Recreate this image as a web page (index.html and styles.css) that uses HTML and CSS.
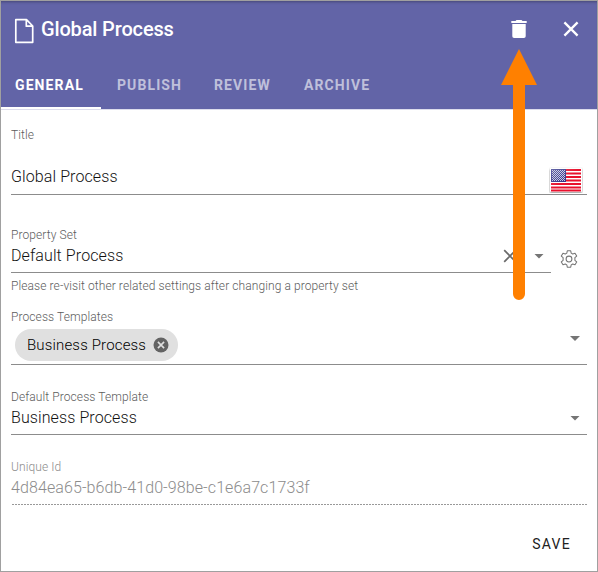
FILE: index.html
```html
<!DOCTYPE html>
<html lang="en">
<head>
<meta charset="utf-8">
<title>Global Process</title>
<link rel="stylesheet" href="styles.css">
</head>
<body>
<div class="dialog">
  <header class="header">
    <div class="toolbar">
      <svg class="doc-icon" width="20" height="26" viewBox="0 0 20 26"><path d="M1.8 1.7H12.5L18.7 8V24.3H1.8ZM12.3 1.7V8.2H18.7" fill="none" stroke="#fff" stroke-width="1.7" stroke-linejoin="round"/></svg>
      <h1 class="title">Global Process</h1>
      <svg class="trash-icon" width="24" height="24" viewBox="0 0 24 24"><path d="M5.3 7H18.7V19.2a1.8 1.8 0 0 1-1.8 1.8H7.1a1.8 1.8 0 0 1-1.8-1.8ZM4.3 4H8.5L9.5 3H14.5L15.5 4H19.7V6H4.3Z" fill="#fff"/></svg>
      <svg class="close-icon" width="24" height="24" viewBox="0 0 24 24"><path d="M5.4 5.4 18.6 18.6M18.6 5.4 5.4 18.6" stroke="#fff" stroke-width="2.3"/></svg>
    </div>
    <nav class="tabs">
      <a class="tab tab-active">GENERAL</a>
      <a class="tab tab-publish">PUBLISH</a>
      <a class="tab tab-review">REVIEW</a>
      <a class="tab tab-archive">ARCHIVE</a>
    </nav>
  </header>
  <main class="form">
    <div class="field field-title">
      <label class="label">Title</label>
      <div class="control">
        <span class="value">Global Process</span>
        <svg class="flag" width="34" height="26" viewBox="0 0 34 26">
          <defs>
            <pattern id="stars" width="2" height="2" patternUnits="userSpaceOnUse"><path d="M0 0h1v1H0ZM1 1h1v1H1Z" fill="#c3c6df"/></pattern>
            <linearGradient id="gloss" x2="1" y2="1"><stop offset="0" stop-color="#fff" stop-opacity=".25"/><stop offset=".5" stop-color="#fff" stop-opacity="0"/></linearGradient>
          </defs>
          <rect class="flag-edge" x="1" y="1" width="32" height="24" rx="1"/>
          <path d="M2 3h30M2 6.5h30M2 10h30M2 13.5h30M2 17h30M2 20.5h30M2 23.5h30" stroke="#e8112d" stroke-width="1.8"/>
          <path d="M2 2h15v13H2Z" fill="#34358a"/><path d="M3 3h13v11H3Z" fill="url(#stars)"/>
          <path d="M2 2h30v22H2Z" fill="url(#gloss)"/>
        </svg>
      </div>
    </div>
    <div class="property-row">
      <div class="field field-property">
        <label class="label">Property Set</label>
        <div class="control">
          <span class="value">Default Process</span>
          <svg class="clear" width="14" height="14" viewBox="0 0 14 14"><path d="M1.2 1.2 12.8 12.8M12.8 1.2 1.2 12.8" stroke="#6a6a6a" stroke-width="1.7"/></svg>
          <span class="caret"></span>
        </div>
      </div>
      <svg class="gear" width="18" height="18" viewBox="0 0 18 18" fill="none" stroke="#757575" stroke-width="1.05" stroke-linejoin="round"><path d="M7.3.8h3.4l.5 2.3 1.5.9 2.3-.8 1.7 2.9-1.8 1.6v2.6l1.8 1.6-1.7 2.9-2.3-.8-1.5.9-.5 2.3H7.3l-.5-2.3-1.5-.9-2.3.8-1.7-2.9 1.8-1.6V7.7L1.3 6.1 3 3.2l2.3.8 1.5-.9Z"/><circle cx="9" cy="9" r="2.9"/></svg>
    </div>
    <p class="hint">Please re-visit other related settings after changing a property set</p>
    <div class="field field-templates">
      <label class="label">Process Templates</label>
      <div class="control">
        <span class="chip">Business Process<svg class="chip-close" width="16" height="16" viewBox="0 0 16 16"><circle cx="8" cy="8" r="7.5" fill="#636363"/><path d="m4.9 4.9 6.2 6.2m0-6.2-6.2 6.2" stroke="#e0e0e0" stroke-width="1.6"/></svg></span>
        <span class="caret"></span>
      </div>
    </div>
    <div class="field field-default">
      <label class="label">Default Process Template</label>
      <div class="control">
        <span class="value">Business Process</span>
        <span class="caret"></span>
      </div>
    </div>
    <div class="field field-id">
      <label class="label">Unique Id</label>
      <div class="control"><span class="value">4d84ea65-b6db-41d0-98be-c1e6a7c1733f</span></div>
    </div>
  </main>
  <footer class="actions"><button class="save">SAVE</button></footer>
  <svg class="pointer" width="36" height="252" viewBox="0 0 36 252"><path d="M18 0 36 36H24V245a6 6 0 0 1-12 0V36H0Z" fill="#ff8000"/></svg>
</div>
</body>
</html>
```
FILE: styles.css
```css
* { box-sizing: border-box; }
body { margin: 0; font-family: Roboto, sans-serif; }
.dialog { position: relative; width: 598px; height: 572px; border: 1px solid #a0a0a0; background: #fff; overflow: hidden; }
.header { height: 109px; background: #6264a7; border-bottom: 1px solid #dcdcec; box-shadow: inset 0 3px 3px -2px rgba(0, 0, 0, .3); }
.toolbar { display: flex; align-items: center; height: 60px; padding: 0 14px 0 13px; }
.title { margin: -4px auto 0 7px; color: #fff; font-size: 20px; line-height: 24px; font-weight: 500; letter-spacing: -.15px; }
.trash-icon { margin: -5px 28px 0 0; }
.close-icon { margin-top: -4px; }
.tabs { display: flex; height: 48px; }
.tab { display: flex; align-items: center; height: 48px; color: rgba(255, 255, 255, .6); font-size: 14px; font-weight: 700; letter-spacing: 1.1px; }
.tab-active { width: 100px; padding: 2px 0 0 14px; color: #fff; border-bottom: 2px solid #fff; }
.tab-publish { width: 98px; padding-left: 16px; }
.tab-review { width: 90px; padding-left: 15px; }
.tab-archive { padding-left: 15px; }
.form { padding: 17px 10px 0; }
.field { display: flex; flex-direction: column; border-bottom: 1px solid #8c8c8c; }
.label, .hint { color: #5c5c5c; font-size: 12px; line-height: 16px; font-weight: 300; letter-spacing: .09px; }
.control { display: flex; align-items: center; height: 29px; padding-bottom: 3px; }
.value { margin-right: auto; color: #111; font-size: 16px; line-height: 24px; font-weight: 300; letter-spacing: .1px; }
.field-title .control { height: 35px; margin-top: 16px; padding: 0; }
.flag { margin: 7px 4px 0 0; }
.flag-edge { fill: #fff; filter: drop-shadow(0 1px 1px rgba(0, 0, 0, .45)); }
.property-row { display: flex; align-items: flex-end; height: 46px; margin-top: 32px; }
.field-property { width: 540px; }
.clear { margin-right: 17px; }
.caret { width: 10px; height: 5px; margin-right: 7px; background: #757575; clip-path: polygon(0 0, 100% 0, 50% 100%); }
.gear { margin: 0 0 5px 9px; }
.hint { margin: 5px 0 0; }
.field-templates { margin-top: 15px; }
.field-templates .control { height: 39px; padding-bottom: 0; align-items: flex-start; }
.chip { display: flex; align-items: center; justify-content: space-between; width: 163px; height: 32px; margin: 4px auto 0 4px; padding: 0 9.5px 0 12px; border-radius: 16px; background: #e0e0e0; color: #000; font-size: 15px; font-weight: 300; letter-spacing: .16px; }
.field-templates .caret { margin-top: 11px; }
.field-default { margin-top: 24px; }
.field-id { height: 46px; margin-top: 24px; border-bottom: 0; background: repeating-linear-gradient(90deg, transparent 0 1px, #999 1px 3px) bottom / 100% 1px no-repeat; }
.field-id .label, .field-id .value { color: #8c8c8c; }
.actions { display: flex; justify-content: flex-end; padding: 21px 26px 0 0; }
.save { border: 0; padding: 0; background: none; color: #212121; font: 400 14px/36px Roboto, sans-serif; letter-spacing: 1.25px; }
.pointer { position: absolute; left: 500px; top: 48px; }
```
